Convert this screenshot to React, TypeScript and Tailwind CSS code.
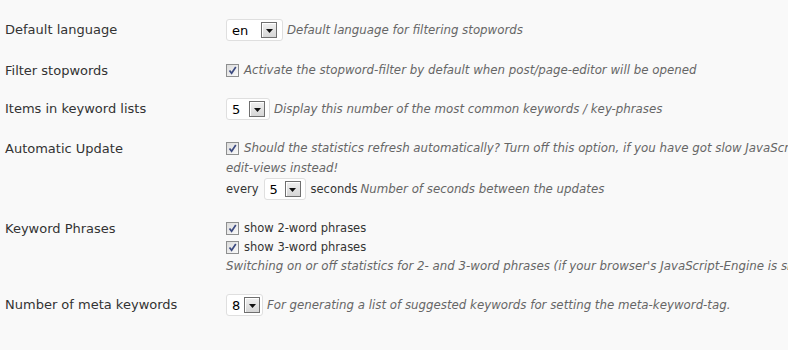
import type { ReactNode } from "react";

function Dropdown({ value, width, pr = "pr-[4px]" }: { value: string; width: string; pr?: string }) {
  return (
    <span
      className={`inline-flex h-[22px] shrink-0 items-center justify-between rounded-[3px] border border-[#dfdfdf] bg-white pl-[5px] text-[13px] text-black ${pr} ${width}`}
    >
      <span className="leading-none">{value}</span>
      <span className="flex h-[16px] w-[16px] shrink-0 items-end justify-center border border-[#6f6f6f] bg-gradient-to-b from-[#f0f0f0] to-[#d6d6d6] pb-[4px] shadow-[inset_1px_1px_0_#ffffff]">
        <svg width="7" height="4" viewBox="0 0 7 4">
          <path d="M0 0h7L3.5 4z" fill="#111" />
        </svg>
      </span>
    </span>
  );
}

function Checkbox() {
  return (
    <span className="inline-flex h-[13px] w-[13px] shrink-0 items-center justify-center border border-[#8e8f8f] bg-gradient-to-br from-[#dcdcdc] to-[#fafafa]">
      <svg width="9" height="9" viewBox="0 0 9 9">
        <path d="M1.5 4.5 L3.6 7.2 L7.8 1" fill="none" stroke="#3c4a80" strokeWidth="1.7" />
      </svg>
    </span>
  );
}

function Note({ children }: { children: ReactNode }) {
  return <span className="whitespace-nowrap text-[11.8px] italic text-[#666]">{children}</span>;
}

function Row({ label, top, children }: { label: string; top: string; children: ReactNode }) {
  return (
    <div className={`flex ${top}`}>
      <div className="w-[226px] shrink-0 pl-[5px] text-[13px] leading-[21px] text-[#333]">{label}</div>
      <div className="flex min-w-0 flex-col text-[11.5px] leading-[20px]">{children}</div>
    </div>
  );
}

export default function App() {
  return (
    <div className="h-[350px] w-[788px] overflow-hidden bg-[#f9f9f9] pt-[19px] font-['DejaVu_Sans',Verdana,sans-serif]">
      <Row label="Default language" top="">
        <div className="flex items-center gap-[4px]">
          <Dropdown value="en" width="w-[57px]" pr="pr-[5px]" />
          <Note>Default language for filtering stopwords</Note>
        </div>
      </Row>

      <Row label="Filter stopwords" top="mt-[19px]">
        <div className="flex items-center gap-[5px]">
          <Checkbox />
          <Note>Activate the stopword-filter by default when post/page-editor will be opened</Note>
        </div>
      </Row>

      <Row label="Items in keyword lists" top="mt-[17px]">
        <div className="flex items-center gap-[4px]">
          <Dropdown value="5" width="w-[44px]" />
          <Note>Display this number of the most common keywords / key-phrases</Note>
        </div>
      </Row>

      <Row label="Automatic Update" top="mt-[18px]">
        <div className="flex items-center gap-[5px]">
          <Checkbox />
          <Note>
            Should the statistics refresh automatically? Turn off this option, if you have got slow JavaScript-Engine
            in your browser and use the
          </Note>
        </div>
        <Note>edit-views instead!</Note>
        <div className="flex items-center whitespace-nowrap text-[#333]">
          <span>every</span>
          <span className="mx-[5px]">
            <Dropdown value="5" width="w-[42px]" />
          </span>
          <span>seconds</span>
          <span className="ml-[3px]">
            <Note>Number of seconds between the updates</Note>
          </span>
        </div>
      </Row>

      <Row label="Keyword Phrases" top="mt-[18px]">
        <div className="flex items-center gap-[5px] text-[#333]">
          <Checkbox />
          <span>show 2-word phrases</span>
        </div>
        <div className="-mt-[1px] flex items-center gap-[5px] text-[#333]">
          <Checkbox />
          <span>show 3-word phrases</span>
        </div>
        <div className="-mt-[1px]">
          <Note>
            Switching on or off statistics for 2- and 3-word phrases (if your browser's JavaScript-Engine is slow,
            turn them off)
          </Note>
        </div>
      </Row>

      <Row label="Number of meta keywords" top="mt-[18px]">
        <div className="flex items-center gap-[4px]">
          <Dropdown value="8" width="w-[37px]" pr="pr-[2px]" />
          <Note>For generating a list of suggested keywords for setting the meta-keyword-tag.</Note>
        </div>
      </Row>
    </div>
  );
}
